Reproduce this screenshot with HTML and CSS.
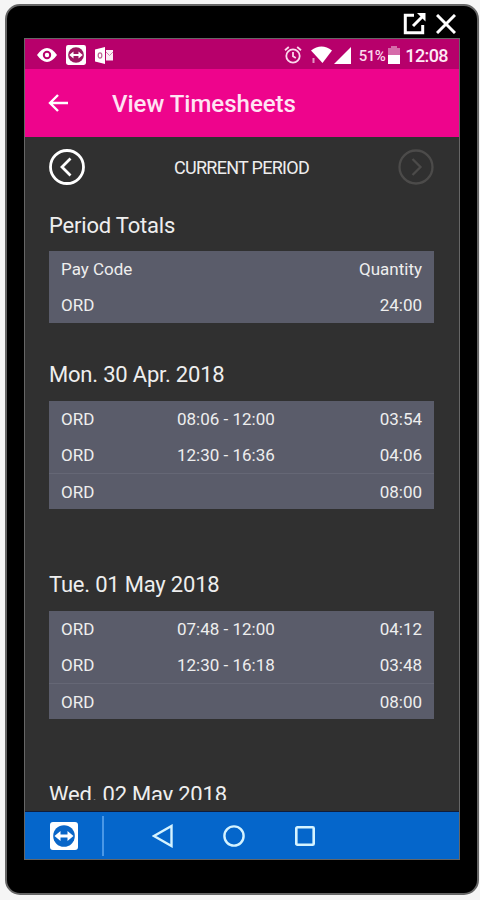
FILE: index.html
```html
<!DOCTYPE html>
<html lang="en">
<head>
    <meta charset="UTF-8">
    <meta name="viewport" content="width=device-width, initial-scale=1.0">
    <title>View Timesheets</title>
    <link rel="stylesheet" href="styles.css">
</head>
<body>
    <div class="phone">
        <!-- Window controls -->
        <div class="window-controls">
            <svg width="24" height="22" viewBox="0 0 24 22" fill="none" stroke="#fff" stroke-width="3">
                <path d="M11 2.3H2.3V19.7H19.7V12"/>
                <path d="M10 13L20 3" stroke-width="3"/>
                <path d="M14 0H22.5V8.5Z" fill="#fff" stroke="none"/>
            </svg>
            <svg width="20" height="20" viewBox="0 0 20 20" fill="none" stroke="#fff" stroke-width="3">
                <path d="M1 1L19 19M19 1L1 19"/>
            </svg>
        </div>

        <div class="screen">
            <!-- Status bar -->
            <div class="status-bar">
                <div class="status-left">
                    <svg width="20" height="14" viewBox="0 0 20 14">
                        <path d="M0 7Q10-7 20 7Q10 21 0 7Z" fill="#fff"/>
                        <circle cx="10" cy="7" r="3.2" fill="#fff" stroke="#b7006b" stroke-width="2"/>
                    </svg>
                    <svg width="20" height="20" viewBox="0 0 28 28">
                        <rect width="28" height="28" rx="3" fill="#fff"/>
                        <circle cx="14" cy="14" r="11" fill="#9d1760"/>
                        <path d="M4.5 14L10.5 9V12.5H17.5V9L23.5 14L17.5 19V15.5H10.5V19Z" fill="#fff"/>
                    </svg>
                    <svg width="18" height="17" viewBox="0 0 18 17">
                        <path d="M0 2.5L10 0V17L0 14.5Z" fill="#fff"/>
                        <path d="M11 3H18V13.5H11Z" fill="#fff" fill-opacity="0.92"/>
                        <path d="M11 5L14.5 8.5L18 5" fill="none" stroke="#c98aad"/>
                        <ellipse cx="5" cy="8.500" rx="1.8" ry="2.6" fill="none" stroke="#c06a98" stroke-width="1.3"/>
                    </svg>
                </div>
                <div class="status-right">
                    <svg class="alarm" width="18" height="18" viewBox="0 0 18 18" fill="none" stroke="#fbd9ec" stroke-width="1.8">
                        <circle cx="9" cy="10" r="6.7"/>
                        <path d="M9 6V10.3L11.8 12M1 4.2L4.8 1M17 4.2L13.2 1"/>
                    </svg>
                    <svg class="wifi" width="21" height="18" viewBox="0 0 21 18" fill="#fff">
                        <path d="M0 4.5Q10.5-3.5 21 4.5L11.500 17Z"/>
                        <path d="M1.5 12H3.5V17H1.5Z" fill-opacity="0.6"/>
                    </svg>
                    <svg class="signal" width="17" height="17" viewBox="0 0 17 17" fill="#fff">
                        <path d="M17 0V17H0Z"/>
                    </svg>
                    <span class="battery-level">51%</span>
                    <svg class="battery" width="12" height="18" viewBox="0 0 12 18" fill="#fff">
                        <path d="M0 2H3V0H9V2H12V9H0Z" fill-opacity="0.42"/>
                        <path d="M0 9H12V18H0Z"/>
                    </svg>
                    <span class="clock">12:08</span>
                </div>
            </div>

            <!-- App bar -->
            <div class="app-bar">
                <svg width="20" height="18" viewBox="0 0 20 18" fill="none" stroke="#fff" stroke-width="2.4">
                    <path d="M20 9H2M10 1L2 9L10 17"/>
                </svg>
                <h1>View Timesheets</h1>
            </div>

            <!-- Timesheet content -->
            <div class="content">
                <div class="period-nav">
                    <svg width="36" height="36" viewBox="0 0 36 36" fill="none" stroke="#fff" stroke-width="2.8">
                        <circle cx="18" cy="18" r="16.5"/>
                        <path d="M21.5 9.5L13 18L21.5 26.5"/>
                    </svg>
                    <span>CURRENT PERIOD</span>
                    <svg width="36" height="36" viewBox="0 0 36 36" fill="none" stroke="#4c4b4a" stroke-width="2.3">
                        <circle cx="18" cy="18" r="16.5"/>
                        <path d="M14.5 10L22.5 18L14.5 26"/>
                    </svg>
                </div>

                <div class="section totals">
                    <h2>Period Totals</h2>
                    <div class="card">
                        <div class="row"><span>Pay Code</span><span></span><span>Quantity</span></div>
                        <div class="row"><span>ORD</span><span></span><span>24:00</span></div>
                    </div>
                </div>

                <div class="section">
                    <h2>Mon. 30 Apr. 2018</h2>
                    <div class="card">
                        <div class="row"><span>ORD</span><span>08:06 - 12:00</span><span>03:54</span></div>
                        <div class="row"><span>ORD</span><span>12:30 - 16:36</span><span>04:06</span></div>
                        <div class="row sum"><span>ORD</span><span></span><span>08:00</span></div>
                    </div>
                </div>

                <div class="section">
                    <h2>Tue. 01 May 2018</h2>
                    <div class="card">
                        <div class="row"><span>ORD</span><span>07:48 - 12:00</span><span>04:12</span></div>
                        <div class="row"><span>ORD</span><span>12:30 - 16:18</span><span>03:48</span></div>
                        <div class="row sum"><span>ORD</span><span></span><span>08:00</span></div>
                    </div>
                </div>

                <div class="section">
                    <h2>Wed. 02 May 2018</h2>
                </div>
            </div>

            <!-- Navigation bar -->
            <div class="nav-bar">
                <svg class="remote" width="28" height="28" viewBox="0 0 28 28">
                    <rect width="28" height="28" rx="3" fill="#fff"/>
                    <circle cx="14" cy="14" r="10.8" fill="#0966c8"/>
                    <path d="M4.5 14L10.500 9V12.5H17.5V9L23.5 14L17.5 19V15.5H10.5V19Z" fill="#fff"/>
                </svg>
                <div class="divider"></div>
                <svg class="back" width="21" height="24" viewBox="0 0 21 24" fill="none" stroke="#d5f3ff" stroke-width="2.4">
                    <path d="M19.500 2V22L2 12Z"/>
                </svg>
                <svg class="home" width="22" height="22" viewBox="0 0 22 22" fill="none" stroke="#d5f3ff" stroke-width="2.4">
                    <circle cx="11" cy="11" r="9.6"/>
                </svg>
                <svg class="recent" width="20" height="20" viewBox="0 0 20 20" fill="none" stroke="#d5f3ff" stroke-width="2.6">
                    <rect x="1.3" y="1.3" width="17.4" height="17.4" rx="1"/>
                </svg>
            </div>
        </div>
    </div>
</body>
</html>
```

FILE: styles.css
```css
/* Base styles */
* {
    box-sizing: border-box;
}

body {
    font-family: Roboto, sans-serif;
    margin: 0;
    padding: 4px 1px 5px 5px;
    height: 900px;
    overflow: hidden;
    background-color: #f5f5f5;
}

svg {
    display: block;
    flex: none;
}

/* Phone frame */
.phone {
    height: 891px;
    padding: 0 17px 33px;
    background-color: #000;
    border: 2px solid #666;
    border-radius: 15px;
}

.window-controls {
    display: flex;
    justify-content: flex-end;
    gap: 9px;
    height: 32px;
    padding: 7px 4px 0 0;
}

.window-controls svg:last-child {
    margin-top: 1px;
}

.screen {
    display: flex;
    flex-direction: column;
    height: 822px;
    border: 1px solid #666;
    background-color: #303030;
    color: #eee;
}

/* Status bar */
.status-bar {
    display: flex;
    flex: none;
    justify-content: space-between;
    align-items: center;
    height: 30px;
    padding: 2px 11px 0 12px;
    background-color: #b7006b;
}

.status-left,
.status-right {
    display: flex;
    align-items: center;
}

.status-left {
    gap: 9px;
}

.wifi {
    margin-left: 9px;
}

.signal {
    margin-left: 2px;
}

.battery-level {
    margin: 1px 3px 0 8px;
    font-size: 15px;
    font-weight: 500;
    letter-spacing: -0.5px;
    color: #fbd9ec;
}

.clock {
    margin: 1px 0 0 5px;
    font-size: 18px;
    font-weight: 500;
    letter-spacing: -0.6px;
    color: #ffe9f5;
}

/* App bar */
.app-bar {
    display: flex;
    flex: none;
    align-items: center;
    height: 68px;
    padding-left: 23px;
    background-color: #ee048c;
}

.app-bar h1 {
    margin: 2px 0 0 44px;
    font-size: 24px;
    font-weight: 500;
    color: #ffe3f3;
}

/* Timesheet content */
.content {
    flex: none;
    height: 663px;
    padding: 12px 25px 0 24px;
    overflow: hidden;
}

.period-nav {
    display: flex;
    justify-content: space-between;
    align-items: center;
    height: 36px;
    margin-bottom: 26px;
}

.period-nav span {
    font-size: 18px;
    letter-spacing: -0.7px;
}

.section {
    margin-bottom: 61px;
}

.totals {
    margin-bottom: 37px;
}

h2 {
    margin: 0 0 10px;
    font-size: 22px;
    font-weight: 400;
    line-height: 30px;
    letter-spacing: -0.2px;
}

.section:not(.totals) h2 {
    margin-top: -1px;
    margin-bottom: 11px;
}

.section:not(.totals) {
    padding-top: 1px;
}

.card {
    background-color: #5a5c6a;
}

.row {
    display: grid;
    grid-template-columns: 116px 1fr auto;
    align-items: center;
    height: 36px;
    padding: 0 12px;
    font-size: 17px;
}

.sum {
    border-top: 1px solid #656775;
}

/* Navigation bar */
.nav-bar {
    display: flex;
    flex: none;
    align-items: center;
    height: 47px;
    margin-top: auto;
    padding: 1px 0 0 25px;
    background-color: #0566cb;
    box-shadow: 0 -1px 0 #101c3c;
}

.divider {
    width: 2px;
    height: 40px;
    margin-left: 24px;
    background-color: #4a97e6;
}

.back {
    margin-left: 48px;
}

.home {
    margin-left: 50px;
}

.recent {
    margin-left: 50px;
}
```
